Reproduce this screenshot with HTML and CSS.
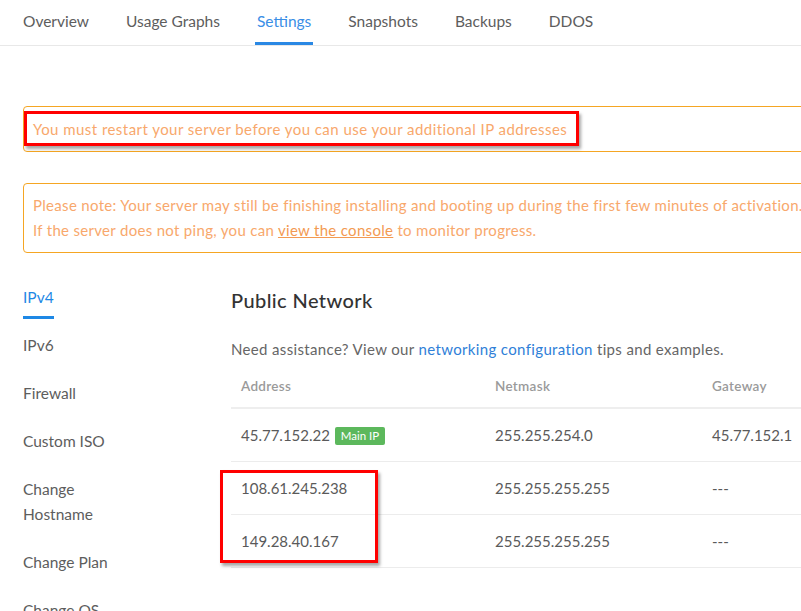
FILE: index.html
```html
<!DOCTYPE html>
<html>
<head>
<meta charset="utf-8">
<link rel="stylesheet" href="styles.css">
</head>
<body>
<div class="page">
  <nav class="tabs">
    <a class="tab">Overview</a>
    <a class="tab">Usage Graphs</a>
    <a class="tab active">Settings</a>
    <a class="tab">Snapshots</a>
    <a class="tab">Backups</a>
    <a class="tab">DDOS</a>
  </nav>
  <div class="content">
    <div class="alert alert-restart">You must restart your server before you can use your additional IP addresses</div>
    <div class="alert alert-note">Please note: Your server may still be finishing installing and booting up during the first few minutes of activation.<br>If the server does not ping, you can <a class="alert-link">view the console</a> to monitor progress.</div>
    <div class="settings">
      <ul class="side">
        <li class="side-item active"><span>IPv4</span></li>
        <li class="side-item"><span>IPv6</span></li>
        <li class="side-item"><span>Firewall</span></li>
        <li class="side-item"><span>Custom ISO</span></li>
        <li class="side-item"><span>Change<br>Hostname</span></li>
        <li class="side-item"><span>Change Plan</span></li>
        <li class="side-item"><span>Change OS</span></li>
      </ul>
      <div class="main">
        <h2 class="title">Public Network</h2>
        <p class="help">Need assistance? View our <a class="link">networking configuration</a> tips and examples.</p>
        <table class="ips">
          <thead>
            <tr><th class="c1">Address</th><th class="c2">Netmask</th><th class="c3">Gateway</th></tr>
          </thead>
          <tbody>
            <tr><td>45.77.152.22 <span class="badge">Main IP</span></td><td>255.255.254.0</td><td>45.77.152.1</td></tr>
            <tr><td>108.61.245.238</td><td>255.255.255.255</td><td>---</td></tr>
            <tr><td>149.28.40.167</td><td>255.255.255.255</td><td>---</td></tr>
          </tbody>
        </table>
      </div>
    </div>
  </div>
  <div class="mark mark-1"></div>
  <div class="mark mark-2"></div>
</div>
</body>
</html>
```

FILE: styles.css
```css
html, body {
  margin: 0;
  padding: 0;
  background: #fff;
  overflow: hidden;
}
body {
  font-family: Lato, "Open Sans", sans-serif;
  color: #555;
}
.page {
  position: relative;
  width: 801px;
  height: 611px;
  overflow: hidden;
}
.tabs {
  display: flex;
  gap: 33px;
  padding-left: 21px;
  height: 45px;
  border-bottom: 1px solid #e8e8e8;
  width: 900px;
}
.tab {
  font-size: 15.5px;
  line-height: 42px;
  color: #5d5d5d;
  padding: 0 2px;
  border-bottom: 3px solid transparent;
}
.tab-usage {
  margin-left: -2px;
}
.tab.active {
  color: #3a8ee6;
  border-bottom-color: #2a88e4;
}
.content {
  padding: 60px 0 0 23px;
  width: 860px;
}
.alert {
  border: 1px solid #f5a623;
  border-radius: 4px;
  color: #f8a86c;
  font-size: 15px;
  letter-spacing: 0.45px;
  line-height: 25px;
  padding: 9px 9px;
  white-space: nowrap;
}
.alert-restart {
  padding: 10px 9px 9px;
}
.alert-note {
  margin-top: 31px;
  letter-spacing: 0.31px;
}
.alert-link {
  color: #f39a52;
  text-decoration: underline;
}
.settings {
  display: flex;
  margin-top: 20px;
}
.side {
  list-style: none;
  margin: 0;
  padding: 0;
  width: 208px;
  flex: none;
}
.side-item {
  font-size: 15.5px;
  line-height: 25px;
  padding: 11.5px 0;
  color: #5d5d5d;
}
.side-item span {
  display: inline-block;
  position: relative;
}
.side-item.active {
  color: #1e88e5;
}
.side-item.active span::after {
  content: "";
  position: absolute;
  left: 0;
  right: 0;
  bottom: -9px;
  height: 3px;
  background: #1e88e5;
}
.main {
  flex: 1;
}
.title {
  margin: 12px 0 0;
  font-size: 20px;
  letter-spacing: 0.4px;
  font-weight: 500;
  line-height: 30px;
  color: #333;
}
.help {
  margin: 24px 0 0;
  font-size: 15px;
  letter-spacing: 0.35px;
  line-height: 20px;
  color: #666;
}
.link {
  color: #2f80d8;
}
.ips {
  border-collapse: collapse;
  margin-top: 6px;
  width: 660px;
}
.ips th {
  text-align: left;
  font-size: 13.5px;
  letter-spacing: 0.3px;
  font-weight: 600;
  color: #9a9a9a;
  padding: 0 10px;
  height: 42px;
  vertical-align: middle;
  border-bottom: 2px solid #eee;
}
.ips .c1 { width: 234px; }
.ips .c2 { width: 197px; }
.ips td {
  font-size: 15px;
  color: #5a5a5a;
  padding: 0 10px;
  height: 52px;
  border-bottom: 1px solid #ececec;
}
.badge {
  display: inline-block;
  background: #5cb85c;
  color: #fff;
  font-size: 11.5px;
  line-height: 18px;
  padding: 0 6px;
  border-radius: 2px;
  margin-left: 1px;
  vertical-align: 1px;
}
.mark {
  position: absolute;
  border: 3px solid #ff0000;
  box-shadow: 2px 3px 3px rgba(0, 0, 0, 0.35);
  box-sizing: border-box;
}
.mark-1 {
  left: 24px;
  top: 111px;
  width: 555px;
  height: 35px;
}
.mark-2 {
  left: 220px;
  top: 470px;
  width: 158px;
  height: 93px;
}
```
